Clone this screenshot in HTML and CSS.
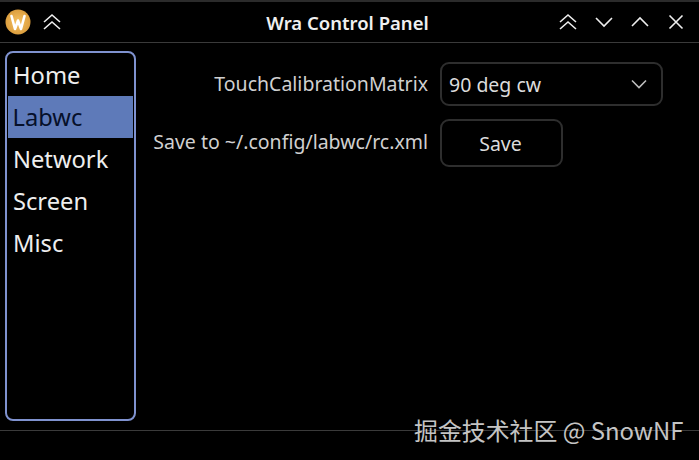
FILE: index.html
```html
<!DOCTYPE html>
<html lang="en">
<head>
<meta charset="utf-8">
<title>Wra Control Panel</title>
<link rel="stylesheet" href="styles.css">
</head>
<body>
<div class="window">
  <header class="titlebar">
    <div class="tb-left">
      <svg class="logo" width="26" height="26" viewBox="0 0 26 26">
        <defs><radialGradient id="lg" cx="50%" cy="50%" r="55%"><stop offset="0" stop-color="#f6c363"/><stop offset="1" stop-color="#d99a3a"/></radialGradient></defs>
        <circle cx="13" cy="13" r="12.5" fill="url(#lg)"/>
        <path d="M6.500 7 L10 20 L13 11.500 L16 20 L19.500 7" fill="none" stroke="#fff" stroke-width="2.6" stroke-linejoin="round" stroke-linecap="round"/>
      </svg>
      <svg class="icon" width="18" height="18" viewBox="0 0 18 18"><path d="M1 9 L9 2 L17 9 M1 16 L9 9 L17 16"/></svg>
    </div>
    <div class="title">Wra Control Panel</div>
    <div class="tb-right">
      <svg class="icon" width="18" height="18" viewBox="0 0 18 18"><path d="M1 9 L9 2 L17 9 M1 16 L9 9 L17 16"/></svg>
      <svg class="icon" width="18" height="18" viewBox="0 0 18 18"><path d="M1 5 L9 13 L17 5"/></svg>
      <svg class="icon" width="18" height="18" viewBox="0 0 18 18"><path d="M1 13 L9 5 L17 13"/></svg>
      <svg class="icon" width="18" height="18" viewBox="0 0 18 18"><path d="M2.500 2.500 L15.500 15.500 M15.500 2.500 L2.500 15.500"/></svg>
    </div>
  </header>
  <div class="content">
    <nav class="sidebar">
      <div class="nav-item">Home</div>
      <div class="nav-item active">Labwc</div>
      <div class="nav-item">Network</div>
      <div class="nav-item">Screen</div>
      <div class="nav-item">Misc</div>
    </nav>
    <main class="form">
      <label class="label label-a">TouchCalibrationMatrix</label>
      <div class="select"><span>90 deg cw</span>
        <svg class="chev" width="16" height="10" viewBox="0 0 16 10"><path d="M1 1.500 L8 8.500 L15 1.500"/></svg>
      </div>
      <label class="label label-b">Save to ~/.config/labwc/rc.xml</label>
      <button class="save">Save</button>
    </main>
  </div>
  <footer class="statusbar"></footer>
</div>
<div class="watermark">掘金技术社区 @ SnowNF</div>
</body>
</html>
```
FILE: styles.css
```css
* { box-sizing: border-box; }
html, body { margin: 0; padding: 0; background: #000; }
body { width: 699px; height: 460px; overflow: hidden; position: relative; font-family: "Noto Sans", "Noto Sans CJK SC", sans-serif; color: #fff; }
.window { display: flex; flex-direction: column; height: 460px; border-top: 2px solid #2b2b2b; }
.titlebar { height: 41px; flex: none; display: flex; align-items: center; justify-content: space-between; border-bottom: 1px solid #3a3a3a; padding: 0 14px 0 5px; position: relative; }
.tb-left { display: flex; align-items: center; gap: 12px; }
.tb-right { display: flex; align-items: center; gap: 18px; }
.logo { display: block; }
.icon { display: block; fill: none; stroke: #eee; stroke-width: 1.6; }
.title { position: absolute; left: 0; right: 4px; text-align: center; font-size: 18.5px; font-weight: 600; color: #f0f0f0; pointer-events: none; }
.content { height: 388px; flex: none; display: flex; border-bottom: 1px solid #3a3a3a; padding: 8px 0 0 5px; }
.sidebar { width: 131px; height: 370px; border: 2px solid #7f92cf; border-radius: 8px; padding: 1px 1px 0; display: flex; flex-direction: column; flex: none; }
.nav-item { height: 42px; flex: none; line-height: 42px; padding-left: 5px; font-size: 23.7px; color: #eee; }
.nav-item.active { background: #5e7ab9; color: #06102a; padding-left: 4.500px; }
.form { flex: none; display: grid; grid-template-columns: 280px 223px; column-gap: 12px; row-gap: 13px; padding: 11px 0 0 12px; align-items: center; grid-template-rows: 44px 48px; }
.label { text-align: right; font-size: 19.5px; color: #d0d0d0; white-space: nowrap; position: relative; top: -1px; }
.label-b { top: -2px; }
.select { height: 44px; border: 2px solid #2e2e2e; border-radius: 9px; display: flex; align-items: center; justify-content: space-between; padding: 0 14px 0 7px; font-size: 19.5px; color: #dcdcdc; }
.chev { fill: none; stroke: #bdbdbd; stroke-width: 1.6; display: block; }
.save { width: 123px; height: 48px; background: #000; border: 2px solid #2e2e2e; border-radius: 9px; font: inherit; font-size: 19.5px; color: #dcdcdc; padding: 0 2px 0 0; }
.watermark { position: absolute; left: 414px; top: 415px; font-size: 23.9px; line-height: 30px; color: #c4c4c4; white-space: nowrap; font-family: "Noto Sans CJK SC", "Noto Sans", sans-serif; }
```
